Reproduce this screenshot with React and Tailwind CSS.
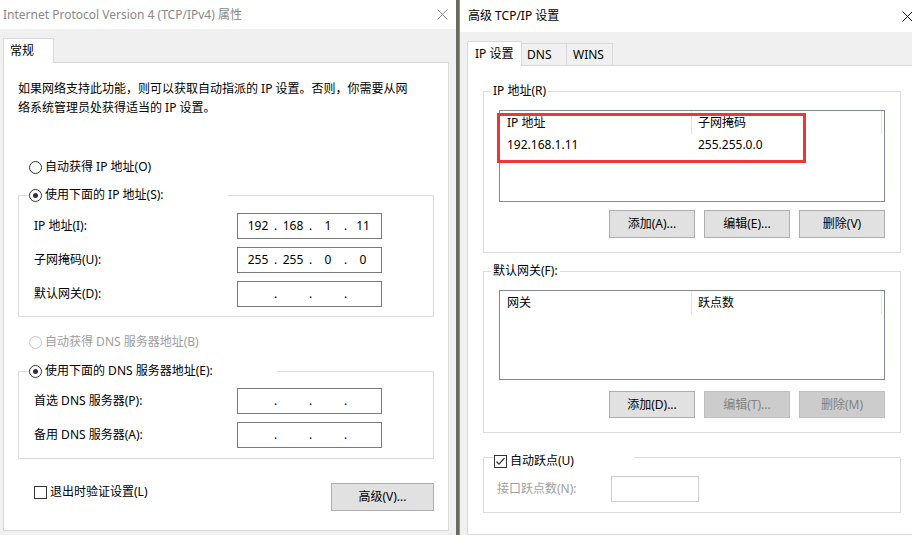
import { Fragment } from 'react'

function CloseX({ color }) {
  return (
    <svg width="11" height="11" viewBox="0 0 11 11">
      <path d="M0.5 0.5 L10.5 10.5 M10.5 0.5 L0.5 10.5" stroke={color} strokeWidth="1" fill="none" />
    </svg>
  )
}

function Radio({ checked, disabled }) {
  return (
    <span
      className={`flex h-[13px] w-[13px] shrink-0 items-center justify-center rounded-full border bg-white ${
        disabled ? 'border-[#c6c6c6]' : 'border-[#333333]'
      }`}
    >
      {checked && <span className="h-[5px] w-[5px] rounded-full bg-[#333333]" />}
    </span>
  )
}

function Check({ checked }) {
  return (
    <span className="flex h-[13px] w-[13px] shrink-0 items-center justify-center border border-[#333333] bg-white">
      {checked && (
        <svg width="11" height="11" viewBox="0 0 11 11">
          <path d="M1.5 5.5 L4 8.2 L9.5 2" stroke="#333333" strokeWidth="1.2" fill="none" />
        </svg>
      )}
    </span>
  )
}

function IpBox({ parts }) {
  return (
    <div className="flex h-[26px] w-[145px] items-center border border-[#7a7a7a] bg-white pl-[5px] leading-[24px]">
      {parts.map((p, i) => (
        <Fragment key={i}>
          {i > 0 && <span className="w-[5px] text-center">.</span>}
          <span className="w-[30px] text-center">{p}</span>
        </Fragment>
      ))}
    </div>
  )
}

function Btn({ children, disabled, className = '' }) {
  return (
    <div
      className={`flex w-[86px] items-center justify-center border ${
        disabled ? 'border-[#bfbfbf] bg-[#cccccc] text-[#838383]' : 'border-[#adadad] bg-[#e1e1e1]'
      } ${className}`}
    >
      {children}
    </div>
  )
}

const empty = ['', '', '', '']

function LeftWindow() {
  return (
    <div className="flex w-[456px] shrink-0 flex-col">
      <div className="flex h-[29px] items-center justify-between bg-white pl-[3px] pr-[8px] text-[#888888]">
        <span>Internet Protocol Version 4 (TCP/IPv4) 属性</span>
        <CloseX color="#8a8a8a" />
      </div>

      <div className="flex flex-1 flex-col pb-[4px] pl-[3px] pt-[9px]">
        <div className="relative z-10 -mb-px flex h-[25px] w-[51px] items-center border border-b-0 border-[#d9d9d9] bg-white pl-[6px]">
          常规
        </div>

        <div className="flex w-[446px] flex-1 flex-col border border-[#d9d9d9] bg-white pl-[14px] pr-[14px]">
          <p className="mt-[16px] leading-[19px]">
            如果网络支持此功能，则可以获取自动指派的 IP 设置。否则，你需要从网
            <br />
            络系统管理员处获得适当的 IP 设置。
          </p>

          <div className="ml-[11px] mt-[42px] flex h-[16px] items-center gap-[3px]">
            <Radio />
            <span>自动获得 IP 地址(O)</span>
          </div>

          <fieldset className="mt-[12px] border border-[#dcdcdc] pb-[9px] pl-[10px]">
            <legend className="flex h-[16px] w-[199px] items-center gap-[3px]">
              <Radio checked />
              <span>使用下面的 IP 地址(S):</span>
            </legend>
            <div className="flex flex-col gap-2 pl-[5px] pt-[10px]">
              <div className="flex items-center">
                <span className="w-[203px]">IP 地址(I):</span>
                <IpBox parts={['192', '168', '1', '11']} />
              </div>
              <div className="flex items-center">
                <span className="w-[203px]">子网掩码(U):</span>
                <IpBox parts={['255', '255', '0', '0']} />
              </div>
              <div className="flex items-center">
                <span className="w-[203px]">默认网关(D):</span>
                <IpBox parts={empty} />
              </div>
            </div>
          </fieldset>

          <div className="ml-[11px] mt-[17px] flex h-[16px] items-center gap-[3px] text-[#9d9d9d]">
            <Radio disabled />
            <span>自动获得 DNS 服务器地址(B)</span>
          </div>

          <fieldset className="mt-[13px] border border-[#dcdcdc] pb-[10px] pl-[10px]">
            <legend className="flex h-[16px] w-[248px] items-center gap-[3px]">
              <Radio checked />
              <span>使用下面的 DNS 服务器地址(E):</span>
            </legend>
            <div className="flex flex-col gap-2 pl-[5px] pt-[9px]">
              <div className="flex items-center">
                <span className="w-[203px]">首选 DNS 服务器(P):</span>
                <IpBox parts={empty} />
              </div>
              <div className="flex items-center">
                <span className="w-[203px]">备用 DNS 服务器(A):</span>
                <IpBox parts={empty} />
              </div>
            </div>
          </fieldset>

          <div className="mt-[24px] flex items-start">
            <div className="ml-[16px] mt-[1px] flex h-[16px] items-center gap-[3px]">
              <Check />
              <span>退出时验证设置(L)</span>
            </div>
            <div className="ml-auto flex h-[28px] w-[103px] items-center justify-center border border-[#adadad] bg-[#e1e1e1]">
              高级(V)...
            </div>
          </div>
        </div>
      </div>
    </div>
  )
}

function ListView({ height, cols, rows, children }) {
  return (
    <div className="relative w-[386px] border border-[#828790] bg-white" style={{ height }}>
      <div className="flex h-[23px] items-center">
        <div className="h-full w-[192px] border-r border-[#e5e5e5] pl-[7px] leading-[23px]">{cols[0]}</div>
        <div className="h-full w-[190px] border-r border-[#e5e5e5] pl-[6px] leading-[23px]">{cols[1]}</div>
      </div>
      {rows.map((r, i) => (
        <div key={i} className="flex h-[22px] items-center">
          <div className="w-[192px] pl-[7px]">{r[0]}</div>
          <div className="w-[190px] pl-[6px]">{r[1]}</div>
        </div>
      ))}
      {children}
    </div>
  )
}

function RightWindow() {
  return (
    <div className="flex w-[470px] shrink-0 flex-col border-l border-[#8c8c8c]">
      <div className="flex h-[32px] items-center justify-between bg-white pl-[8px] pr-[16px]">
        <span>高级 TCP/IP 设置</span>
        <CloseX color="#111111" />
      </div>

      <div className="flex flex-1 flex-col pl-[7px] pt-[9px]">
        <div className="flex items-end">
          <div className="relative z-10 -mb-px flex h-[25px] w-[55px] items-center border border-b-0 border-[#d9d9d9] bg-white pl-[7px]">
            IP 设置
          </div>
          <div className="-ml-px flex h-[22px] w-[46px] items-center border border-b-0 border-[#d9d9d9] pl-[5px]">
            DNS
          </div>
          <div className="-ml-px flex h-[22px] w-[47px] items-center border border-b-0 border-[#d9d9d9] pl-[6px]">
            WINS
          </div>
        </div>

        <div className="flex flex-1 flex-col border border-[#d9d9d9] bg-white pl-[15px]">
          <fieldset className="mt-[17px] w-[418px] border border-[#dcdcdc] pb-[14px] pl-[7px]">
            <legend className="h-[16px] px-[2px] leading-[16px]">IP 地址(R)</legend>
            <div className="ml-[8px] pt-[11px]">
              <ListView height="92px" cols={['IP 地址', '子网掩码']} rows={[['192.168.1.11', '255.255.0.0']]}>
                <div className="absolute left-[-3px] top-[2px] h-[50px] w-[309px] border-[3px] border-[#ef3636]" />
              </ListView>
              <div className="mt-[8px] flex w-[386px] justify-end gap-[9px]">
                <Btn className="h-[28px]">添加(A)...</Btn>
                <Btn className="h-[28px]">编辑(E)...</Btn>
                <Btn className="h-[28px]">删除(V)</Btn>
              </div>
            </div>
          </fieldset>

          <fieldset className="mt-[10px] w-[418px] border border-[#dcdcdc] pb-[14px] pl-[7px]">
            <legend className="h-[16px] px-[2px] leading-[16px]">默认网关(F):</legend>
            <div className="ml-[8px] pt-[11px]">
              <ListView height="90px" cols={['网关', '跃点数']} rows={[]} />
              <div className="mt-[11px] flex w-[386px] justify-end gap-[9px]">
                <Btn className="h-[27px]">添加(D)...</Btn>
                <Btn className="h-[27px]" disabled>
                  编辑(T)...
                </Btn>
                <Btn className="h-[27px]" disabled>
                  删除(M)
                </Btn>
              </div>
            </div>
          </fieldset>

          <fieldset className="mt-[12px] w-[418px] border border-[#dcdcdc] pb-[10px] pl-[10px]">
            <legend className="h-[24px] w-[140px] pt-[8px]">
              <div className="flex h-[16px] items-center gap-[3px]">
                <Check checked />
                <span>自动跃点(U)</span>
              </div>
            </legend>
            <div className="flex items-center pl-[3px] pt-[7px]">
              <span className="w-[114px] text-[#a0a0a0]">接口跃点数(N):</span>
              <div className="h-[26px] w-[88px] border border-[#cccccc] bg-white" />
            </div>
          </fieldset>
        </div>
      </div>
    </div>
  )
}

export default function App() {
  return (
    <div className="flex h-[535px] w-[912px] overflow-hidden bg-[#f0f0f0] font-['Noto_Sans','Noto_Sans_CJK_SC',sans-serif] text-[12px] text-black">
      <LeftWindow />
      <div className="w-[3px] shrink-0 bg-[#6b6a60]" />
      <RightWindow />
    </div>
  )
}
